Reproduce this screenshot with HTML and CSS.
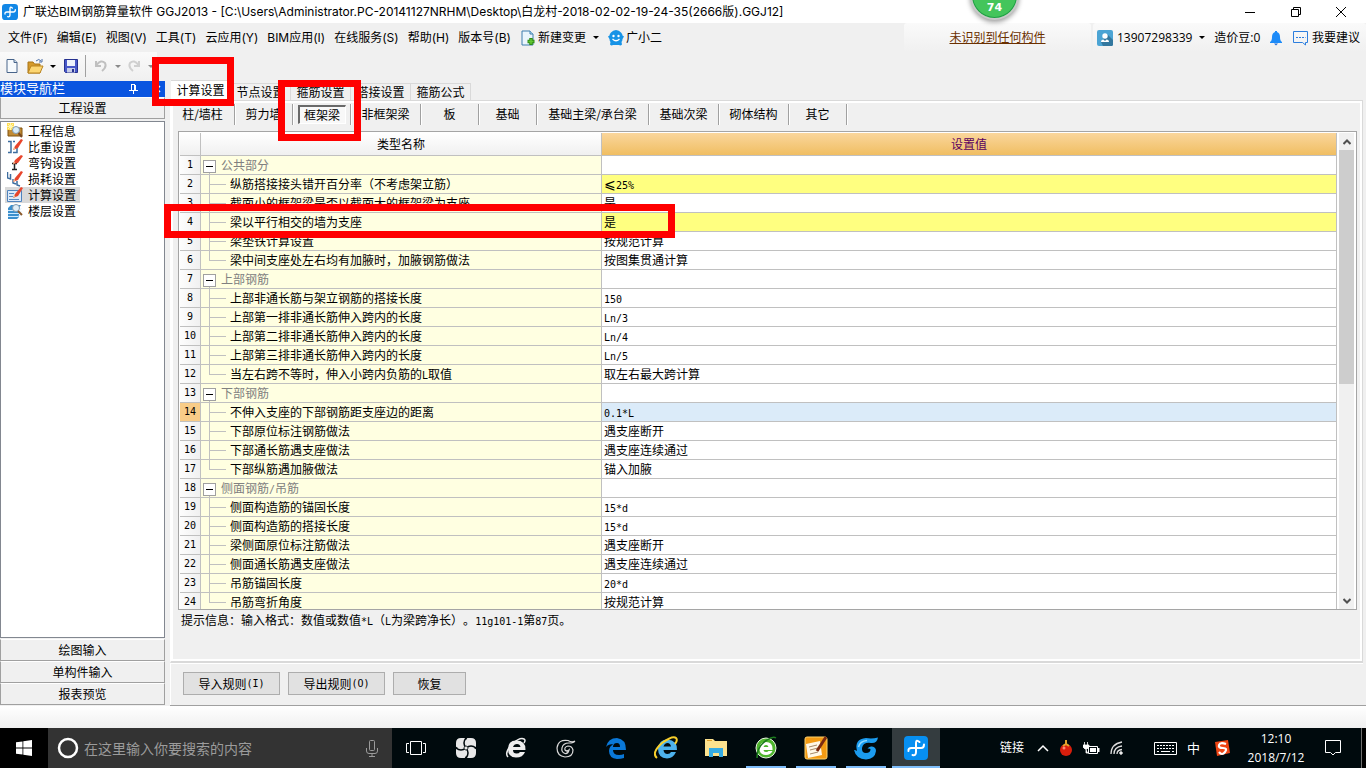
FILE: index.html
```html
<!DOCTYPE html>
<html lang="zh-CN">
<head>
<meta charset="utf-8">
<title>广联达BIM钢筋算量软件 GGJ2013</title>
<link rel="stylesheet" href="styles.css">
</head>
<body>
<header class="titlebar">
  <svg class="app-logo" width="16" height="16" viewBox="0 0 24 24"><rect width="24" height="24" rx="5" fill="#1287e6"/><path d="M15.500 6q-3.500-3-3.500 1v9q0 4-3.500 3M4.500 15q-.500-3 3-3H17q3 0 3-3.500" fill="none" stroke="#fff" stroke-width="2" stroke-linecap="round"/></svg>
  <h1 class="title">广联达BIM钢筋算量软件 GGJ2013 - [C:\Users\Administrator.PC-20141127NRHM\Desktop\白龙村-2018-02-02-19-24-35(2666版).GGJ12]</h1>
  <div class="window-controls">
    <button aria-label="最小化"><svg width="12" height="12"><path d="M1 6.500h10" stroke="#000"/></svg></button>
    <button aria-label="还原"><svg width="12" height="12" fill="none" stroke="#000"><path d="M1.500 3.500h7v7h-7zM3.500 3.500v-2h7v7h-2"/></svg></button>
    <button aria-label="关闭"><svg width="12" height="12"><path d="M1 1l10 10M11 1L1 11" stroke="#000"/></svg></button>
  </div>
  <div class="speed-ball"><span>74</span></div>
</header>

<nav class="menubar">
  <div class="menus">
    <button>文件(F)</button><button>编辑(E)</button><button>视图(V)</button><button>工具(T)</button><button>云应用(Y)</button><button>BIM应用(I)</button><button>在线服务(S)</button><button>帮助(H)</button><button>版本号(B)</button>
    <button class="with-icon"><svg width="16" height="16" viewBox="0 0 16 16"><path d="M2 1h8l3 3v11H2z" fill="#eaf5fc" stroke="#3f7fae"/><path d="M10 1v3h3" fill="#b8dcf2" stroke="#3f7fae"/><path d="M11 8v7M7.500 11.500h7" stroke="#2f8c16" stroke-width="3.500"/><path d="M11 9v5M8.500 11.500h5" stroke="#63c834" stroke-width="1.500"/></svg>新建变更<i class="caret"></i></button>
    <button class="with-icon"><svg width="16" height="16" viewBox="0 0 16 16"><path d="M3 2.500Q5 0 8 0t5 2.500q1.500 1.500 1.500 3l1.500 1-1.500 2.500q0 2-1 3l.500 2.500q-1.500 1.500-3 .500H5q-1.500 1-3-.500l.500-2.500q-1-1-1-3L0 6.500l1.500-1q0-1.500 1.500-3z" fill="#1793e6"/><circle cx="5.500" cy="6" r="1.200" fill="#fff"/><circle cx="10.500" cy="6" r="1.200" fill="#fff"/><path d="M4.500 9q3.500 3.500 7 0" fill="none" stroke="#fff" stroke-width="1.200"/></svg>广小二</button>
  </div>
  <div class="component-link"><a href="#">未识别到任何构件</a></div>
  <div class="account">
    <button class="user"><svg width="16" height="16" viewBox="0 0 16 16"><rect width="16" height="16" rx="2" fill="#4ba4d4"/><path d="M10 4l6 6v5l-1 1H6l-2-4z" fill="#33789f"/><circle cx="8" cy="6" r="2.700" fill="#fff"/><path d="M4 12q0-2.500 2.500-2.500L8 11l1.500-1.500Q12 9.500 12 12z" fill="#fff"/></svg>13907298339<i class="caret"></i></button>
    <span class="beans">造价豆:0</span>
    <button aria-label="通知"><svg width="14" height="16" viewBox="0 0 14 16"><path d="M6 1h2v1q3 1 3 5t2 5v1H1v-1q2-1 2-5t3-5z" fill="#1d8bf8"/><path d="M5 13.500h4L7 15.500z" fill="#1d6bd8"/></svg></button>
    <button class="suggest"><svg width="17" height="16" viewBox="0 0 17 16" fill="none" stroke="#2d7ede"><path d="M1.500 1.500h14v11h-2v2.500l-3-2.500h-9z"/><path d="M4 7.500h9.500" stroke-dasharray="2 1"/></svg>我要建议</button>
  </div>
</nav>

<div class="toolbar">
  <button aria-label="新建"><svg width="16" height="16" viewBox="0 0 16 16"><path d="M3 1.500h7l3 3v10H3z" fill="#f6fafd" stroke="#48648a"/><path d="M10 1.500v3h3" fill="#cfe0ef" stroke="#48648a"/></svg></button>
  <button class="open" aria-label="打开"><svg width="17" height="16" viewBox="0 0 17 16"><path d="M1 4h5l1.500 2H13v9H1z" fill="#d59a2b" stroke="#a87418"/><path d="M4 8h12l-3 7H1z" fill="#fcd672" stroke="#b98421"/><path d="M9 3q3-3 5 0m1-2v3h-3" fill="none" stroke="#4a6fa8"/></svg><i class="caret"></i></button>
  <button class="save" aria-label="保存"><svg width="16" height="16" viewBox="0 0 16 16"><path d="M1.500 1.500h13v13h-12l-1-1z" fill="#4858c8" stroke="#26318f"/><path d="M4 2h8v6H4z" fill="#eef2fb"/><path d="M4 10h8v4.500H4z" fill="#c7cde8"/><path d="M9 11h2v3H9z" fill="#26318f"/></svg></button>
  <i class="divider"></i>
  <button aria-label="撤销" class="undo"><svg width="14" height="14" viewBox="0 0 14 14" fill="none" stroke="#c0c0c0" stroke-width="2"><path d="M2 2v5h5M2.500 6Q7 0 11 4q2 4-3 8"/></svg><i class="caret dim"></i></button>
  <button aria-label="恢复" class="undo"><svg width="14" height="14" viewBox="0 0 14 14" fill="none" stroke="#d0d0d0" stroke-width="2"><path d="M12 2v5H7M11.500 6Q7 0 3 4q-2 4 3 8"/></svg><i class="caret dim"></i></button>
</div>

<main class="workspace">
  <aside class="sidebar">
    <div class="side-title"><span>模块导航栏</span>
      <svg width="9" height="10" viewBox="0 0 9 10"><path d="M2.500 1v5M2 .500h4M5.500 1v5M6.500 1v5M0 6.500h9M4.500 7v3" stroke="#fff" fill="none"/></svg>
      <svg width="7" height="8" viewBox="0 0 7 8"><path d="M0 1l6 6M6 1L0 7" stroke="#fff" stroke-width="1.500"/></svg>
    </div>
    <button class="side-button">工程设置</button>
    <ul class="side-list">
      <li><a href="#"><svg width="16" height="16" viewBox="0 0 16 16"><path d="M1 4h5l2 1h7v8H1z" fill="#c18b35" stroke="#80520e"/><path d="M0 0h7v7H0z" fill="#ffdd55"/><path d="M3.500 0v7M0 3.500h7M1 1l5 5M6 1L1 6" stroke="#fff5b0"/><circle cx="9" cy="7" r="3.500" fill="#d8ecf8" stroke="#8098ac"/><path d="M11.500 10l3.500 4" stroke="#7a4a22" stroke-width="2"/></svg>工程信息</a></li>
      <li><a href="#"><svg width="16" height="16" viewBox="0 0 16 16"><path d="M1 2.500h3v11H1M8 2.500H6m0 11h4V8" fill="none" stroke="#3d6d9f" stroke-width="1.500"/><path d="M6 11l2-4 6-7 2 1-5 8z" fill="#e8452c"/><path d="M6 11l1-3 1.500 1.500z" fill="#edc08f"/></svg>比重设置</a></li>
      <li><a href="#"><svg width="16" height="16" viewBox="0 0 16 16"><path d="M5 8.500h5M7.500 8v6M5 14.500h5" stroke="#222" stroke-width="1.500"/><path d="M6 9l2-4 6-5 2 1-5 7z" fill="#e8452c"/><path d="M6 9l1-2.500L8.500 8z" fill="#edc08f"/></svg>弯钩设置</a></li>
      <li><a href="#"><svg width="16" height="16" viewBox="0 0 16 16"><path d="M.500 1v6l3 1V3M6 8v4l3 1M10 10v4l3 1" fill="none" stroke="#3d6d9f" stroke-width="1.500"/><path d="M6 11l2-4 6-7 2 1-5 8z" fill="#e8452c"/><path d="M6 11l1-3 1.500 1.500z" fill="#edc08f"/></svg>损耗设置</a></li>
      <li class="selected"><a href="#"><svg width="16" height="16" viewBox="0 0 16 16"><path d="M.500 3.500h14v11H.500z" fill="#dceafa" stroke="#4f83bd"/><path d="M2 6.500h5M2 9.500h4M2 12.500h10" stroke="#5c8bc0"/><path d="M6 11l2-4 6-7 2 1-5 8z" fill="#e8452c"/><path d="M6 11l1-3 1.500 1.500z" fill="#edc08f"/></svg>计算设置</a></li>
      <li><a href="#"><svg width="16" height="16" viewBox="0 0 16 16"><path d="M1 5l3-3h10l-2 3v9l-2 2H1z" fill="#3b8fcd"/><path d="M1 7.500h11l2-2M1 10.500h11l2-2M1 13.500h10l3-2" fill="none" stroke="#cdeaff"/><circle cx="9" cy="5" r="3.500" fill="#dfeef8" stroke="#8098ac"/><path d="M11 8l4 4" stroke="#8b5a2c" stroke-width="2"/></svg>楼层设置</a></li>
    </ul>
    <button class="side-button">绘图输入</button>
    <button class="side-button">单构件输入</button>
    <button class="side-button">报表预览</button>
  </aside>

  <section class="content">
    <div class="tabs">
      <button class="active">计算设置</button><button>节点设置</button><button>箍筋设置</button><button>搭接设置</button><button>箍筋公式</button>
    </div>
    <div class="panel">
      <div class="subtabs">
        <button class="first">柱/墙柱</button><button>剪力墙</button><button class="pressed"><span>框架梁</span></button><button class="mid">非框架梁</button><button>板</button><button>基础</button><button class="wide">基础主梁/承台梁</button><button class="mid">基础次梁</button><button class="mid">砌体结构</button><button>其它</button>
      </div>
      <div class="grid">
        <div class="grid-view">
          <table>
            <colgroup><col class="c-num"><col class="c-name"><col></colgroup>
            <thead><tr><th></th><th>类型名称</th><th class="value-head">设置值</th></tr></thead>
            <tbody>
              <tr class="group"><th>1</th><td><button aria-label="折叠"></button>公共部分</td><td></td></tr>
              <tr class="changed"><th>2</th><td>纵筋搭接接头错开百分率（不考虑架立筋）</td><td><span class="sign">⩽</span><span class="m">25%</span></td></tr>
              <tr><th>3</th><td>截面小的框架梁是否以截面大的框架梁为支座</td><td>是</td></tr>
              <tr class="changed"><th>4</th><td>梁以平行相交的墙为支座</td><td>是</td></tr>
              <tr><th>5</th><td>梁垫铁计算设置</td><td>按规范计算</td></tr>
              <tr class="last"><th>6</th><td>梁中间支座处左右均有加腋时，加腋钢筋做法</td><td>按图集贯通计算</td></tr>
              <tr class="group"><th>7</th><td><button aria-label="折叠"></button>上部钢筋</td><td></td></tr>
              <tr><th>8</th><td>上部非通长筋与架立钢筋的搭接长度</td><td><span class="m">150</span></td></tr>
              <tr><th>9</th><td>上部第一排非通长筋伸入跨内的长度</td><td><span class="m">Ln/3</span></td></tr>
              <tr><th>10</th><td>上部第二排非通长筋伸入跨内的长度</td><td><span class="m">Ln/4</span></td></tr>
              <tr><th>11</th><td>上部第三排非通长筋伸入跨内的长度</td><td><span class="m">Ln/5</span></td></tr>
              <tr class="last"><th>12</th><td>当左右跨不等时，伸入小跨内负筋的<span class="m">L</span>取值</td><td>取左右最大跨计算</td></tr>
              <tr class="group"><th>13</th><td><button aria-label="折叠"></button>下部钢筋</td><td></td></tr>
              <tr class="current"><th>14</th><td>不伸入支座的下部钢筋距支座边的距离</td><td><span class="m">0.1*L</span></td></tr>
              <tr><th>15</th><td>下部原位标注钢筋做法</td><td>遇支座断开</td></tr>
              <tr><th>16</th><td>下部通长筋遇支座做法</td><td>遇支座连续通过</td></tr>
              <tr class="last"><th>17</th><td>下部纵筋遇加腋做法</td><td>锚入加腋</td></tr>
              <tr class="group"><th>18</th><td><button aria-label="折叠"></button>侧面钢筋<span class="m">/</span>吊筋</td><td></td></tr>
              <tr><th>19</th><td>侧面构造筋的锚固长度</td><td><span class="m">15*d</span></td></tr>
              <tr><th>20</th><td>侧面构造筋的搭接长度</td><td><span class="m">15*d</span></td></tr>
              <tr><th>21</th><td>梁侧面原位标注筋做法</td><td>遇支座断开</td></tr>
              <tr><th>22</th><td>侧面通长筋遇支座做法</td><td>遇支座连续通过</td></tr>
              <tr><th>23</th><td>吊筋锚固长度</td><td><span class="m">20*d</span></td></tr>
              <tr class="last"><th>24</th><td>吊筋弯折角度</td><td>按规范计算</td></tr>
            </tbody>
          </table>
        </div>
        <div class="scrollbar">
          <button aria-label="向上"><svg width="8" height="6" viewBox="0 0 8 6"><path d="M.500 5L4 1.500 7.500 5" fill="none" stroke="#505050" stroke-width="2"/></svg></button>
          <div class="track"><div class="thumb"></div></div>
          <button aria-label="向下"><svg width="8" height="6" viewBox="0 0 8 6"><path d="M.500 1L4 4.500 7.500 1" fill="none" stroke="#505050" stroke-width="2"/></svg></button>
        </div>
      </div>
      <p class="hint">提示信息：输入格式：数值或数值<span class="m">*L</span>（<span class="m">L</span>为梁跨净长）。<span class="m">11g101-1</span>第<span class="m">87</span>页。</p>
    </div>
    <div class="actions">
      <button>导入规则<span class="m">(I)</span></button><button>导出规则<span class="m">(O)</span></button><button class="short">恢复</button>
    </div>
  </section>
  <div class="mark mark-tab"></div>
  <div class="mark mark-subtab"></div>
  <div class="mark mark-row"></div>
</main>
<div class="statusbar"></div>

<footer class="taskbar">
  <button class="start" aria-label="开始"><svg width="16" height="16" viewBox="0 0 16 16" fill="#fff"><path d="M0 2.300l6.500-.900v6.200H0zM7.300 1.300L16 0v7.600H7.300zM0 8.400h6.500v6.200L0 13.700zM7.300 8.400H16V16l-8.700-1.300z"/></svg></button>
  <label class="search"><svg width="22" height="22"><circle cx="11" cy="11" r="9" fill="none" stroke="#fff" stroke-width="2.500"/></svg><input type="text" placeholder="在这里输入你要搜索的内容" aria-label="搜索"><svg width="12" height="17" viewBox="0 0 12 17" fill="none" stroke="#9b9b9b"><rect x="3.500" y=".500" width="5" height="10" rx="1"/><path d="M.500 8v3q0 2.500 2.500 2.500h6q2.500 0 2.500-2.500V8M6 13.500v3M3 16.500h6"/></svg></label>
  <div class="apps">
    <button aria-label="任务视图"><svg width="20" height="14" fill="none" stroke="#fff"><path d="M4.500.500h11v13h-11zM3 2.500H.500v9H3M17 2.500h2.500v9H17"/></svg></button>
    <button aria-label="风扇"><svg width="22" height="22" viewBox="0 0 22 22"><path d="M6 1h10q5 0 5 5v10q0 5-5 5H6q-5 0-5-5V6q0-5 5-5z" fill="#e8e8e8"/><path d="M11 11Q7 6 11 1M11 11q5-4 10 0M11 11q4 5 0 10M11 11q-5 4-10 0" fill="none" stroke="#000a0d" stroke-width="1.500"/><circle cx="11" cy="11" r="2" fill="#e8e8e8" stroke="#000a0d" stroke-width=".800"/><path d="M9 0h4l-2 3zM9 22h4l-2-3zM0 9v4l3-2zM22 9v4l-3-2z" fill="#000a0d"/></svg></button>
    <button aria-label="浏览器"><svg width="22" height="22" viewBox="0 0 22 22"><path d="M20 15q-2 5.500-9 5.500-8 0-8-8.500t8-8.500q10 0 9.500 9.500H8q0 3.500 3.500 3.500 2.500 0 3.500-1.500zM8 10h7.500q-.500-3-3.500-3t-4 3z" fill="#eee" fill-rule="evenodd"/><path d="M3 20Q-1 16 7 7q8-7 12-5 2 1 0 4" fill="none" stroke="#eee" stroke-width="1.500"/></svg></button>
    <button aria-label="广联达"><svg width="20" height="20" viewBox="0 0 20 20" fill="none" stroke="#d9d9d9" stroke-width="1.200"><path d="M19 3q-3 2-7-.500Q2 1 1 10q0 8 8 9 8 0 8-7-1-4-5-4-4 1-3 4 2 2 4 0-1 4-4 3.500Q5 14 6 10q1-5 7-5 5 0 6-2"/></svg></button>
    <button aria-label="Edge"><svg width="20" height="21" viewBox="0 0 20 21"><path d="M0 9Q2 0 11 0q9 1 9 12H7q0 5 6 5 3 0 5-1v4q-3 1-7 1-8-1-8-8 0-5 5-7-6 0-8 3zM7 9h7q0-4-3-4-4 0-4 4z" fill="#0a78d7" fill-rule="evenodd"/></svg></button>
    <button aria-label="Internet Explorer"><svg width="24" height="24" viewBox="0 0 24 24"><path d="M22 16q-3 6.500-9 6.500-9-.500-9-10 1-9 9.500-9 10 1 9.500 10.500H9.500q.500 4 4 4 2.500 0 3.500-2zM9.500 10.500H17q-.500-3.500-3.500-3.500t-4 3.500z" fill="#4db2ec" fill-rule="evenodd"/><path d="M3 22Q-3 17 8 7q11-8 14-5 2 2-1 6" fill="none" stroke="#f7cf2c" stroke-width="2"/></svg></button>
    <button aria-label="文件资源管理器"><svg width="22" height="18" viewBox="0 0 22 18"><path d="M0 0h8l2 2h12v15H0z" fill="#fce28e"/><path d="M2 1h5v1H2z" fill="#de9e27"/><path d="M4 9h14v9h-4v-4H8v4H4z" fill="#35abe3"/></svg></button>
    <button class="running" aria-label="360浏览器"><svg width="22" height="24" viewBox="0 0 22 24"><circle cx="11" cy="12" r="10" fill="#4fb52e" stroke="#e8f6e2"/><path d="M17.500 15q-2 4-6.500 4-6.500 0-6.500-6.500T11 6q7 0 6.500 8H8.500q0 2 2.500 2 2 0 2.500-1zM8.500 11h5q-.500-2-2.500-2t-2.500 2z" fill="#fff" fill-rule="evenodd"/><path d="M2 22Q2 10 12 4q6-4 9-2" fill="none" stroke="#1b7b1d" stroke-width="1.500"/></svg></button>
    <button class="running" aria-label="笔记"><svg width="24" height="24" viewBox="0 0 24 24"><rect x="1" y="1" width="22" height="22" rx="2" fill="#f39b13" stroke="#ffd36d"/><path d="M2 8l14-3 2 14-14 3z" fill="#fff8e8"/><path d="M5 11l8-2M6 14l8-2M6 18l8-2" stroke="#a78a68"/><path d="M13 15L22 1" stroke="#7c2b10" stroke-width="3"/></svg></button>
    <button class="running" aria-label="广联达G"><svg width="24" height="24" viewBox="0 0 24 24"><path d="M24 1.500q-1 6-7 5.500-8-1-9 5-.500 5 4 5t4.500-4q-2-1-3 0 1-3 4.500-2.500Q22 11 22 15q-1 8-10 8.500Q2 23 0 14q2 0 3 1Q0 3 12 2q6 1 12-.500z" fill="#1b9cef"/><path d="M4.500 11Q6 5 13 4.500" fill="none" stroke="#8ed9ff" stroke-width="1.500"/></svg></button>
    <button class="running current" aria-label="广联达BIM"><svg width="24" height="24" viewBox="0 0 24 24"><rect width="24" height="24" rx="4" fill="#078ff1"/><path d="M15.500 6q-3.500-3-3.500 1v9q0 4-3.500 3M4.500 15q-.500-3 3-3H17q3 0 3-3.500" fill="none" stroke="#fff" stroke-width="2" stroke-linecap="round"/></svg></button>
  </div>
  <div class="tray">
    <span class="links">链接</span>
    <button aria-label="显示隐藏的图标"><svg width="12" height="8"><path d="M1 7l5-5 5 5" fill="none" stroke="#fff" stroke-width="1.500"/></svg></button>
    <svg width="14" height="16" viewBox="0 0 14 16"><circle cx="7" cy="10" r="6" fill="#d81e0c"/><path d="M7 0v5M4 6l3-2 3 2" stroke="#e0a42c" stroke-width="2" fill="none"/><circle cx="5" cy="8" r="1.500" fill="#ff8672"/></svg>
    <svg width="17" height="13" viewBox="0 0 17 13"><path d="M5.500 4.500h9v7h-9z" fill="none" stroke="#fff"/><path d="M7 6h6v4H7zM15 6h1.500v4H15z" fill="#fff"/><path d="M1.500 0v3M4.500 0v3M0 3h6v2L4 7H2L0 5zM3 7v4h2" fill="#fff" stroke="#fff" stroke-width=".800"/></svg>
    <svg width="14" height="14" viewBox="0 0 14 14" fill="none" stroke="#ddd"><path d="M1 13Q1 3 12 1M4 13q0-7 8-8M7 13q0-4 5-4.500" stroke-width="1.300"/><circle cx="11" cy="12" r="1.300" fill="#fff"/></svg>
    <svg class="keyboard" width="23" height="13" viewBox="0 0 23 13" fill="none" stroke="#fff"><path d="M.500.500h22v12H.500z"/><path d="M3 3.500h17M3 6.500h17" stroke-dasharray="2 1"/><path d="M3 9.500h2M7 9.500h9M18 9.500h2"/></svg>
    <span class="ime">中</span>
    <svg width="16" height="16" viewBox="0 0 16 16"><path d="M1 2l13-2 2 13-13 3z" fill="#ee4514"/><path d="M12 4Q6 2 5 5t4 3 2 4-6 0" fill="none" stroke="#fff" stroke-width="2.200"/></svg>
    <time><span>12:10</span><span>2018/7/12</span></time>
    <button class="notice" aria-label="操作中心"><svg width="17" height="16" fill="none" stroke="#fff"><path d="M.500.500h15v12h-5l-2.500 2.500-2.500-2.500h-5z"/></svg></button>
  </div>
  <button class="show-desktop" aria-label="显示桌面"></button>
</footer>
</body>
</html>
```
FILE: styles.css
```css
* { box-sizing: border-box; }

body {
  margin: 0;
  height: 100vh;
  display: flex;
  flex-direction: column;
  overflow: hidden;
  background: #f0f0f0;
  color: #000;
  font: 12px/16px "Open Sans", "Noto Sans CJK SC", sans-serif;
  white-space: nowrap;
  text-spacing-trim: space-all;
}

button {
  display: flex;
  align-items: center;
  justify-content: center;
  margin: 0;
  padding: 0;
  border: 0;
  background: none;
  color: inherit;
  font: inherit;
  white-space: nowrap;
}

svg { flex: none; display: block; }

.m { font-family: "DejaVu Sans Mono", monospace; font-size: 10px; line-height: 1; }

.caret {
  border: 3px solid transparent;
  border-top-color: #000;
  border-bottom: 0;
}
.caret.dim { border-top-color: #8a8a8a; }

/* title bar */
.titlebar {
  position: relative;
  z-index: 1;
  flex: none;
  display: flex;
  align-items: center;
  height: 23px;
  padding-left: 2px;
  background: #fff;
}
.title { flex: 1; margin: 0 0 0 5px; font: 400 12px/16px Inter, "Noto Sans CJK SC", sans-serif; }
.window-controls { display: flex; padding-right: 3px; }
.window-controls button { width: 46px; height: 20px; }
.window-controls button:last-child { width: 44px; }
.speed-ball {
  position: absolute;
  top: -29px;
  left: 970px;
  width: 49px;
  height: 49px;
  display: flex;
  justify-content: center;
  align-items: flex-end;
  padding-bottom: 2px;
  border: 2px solid #c9c9c9;
  border-radius: 50%;
  background: #44c55b;
  box-shadow: inset 0 0 0 1px #1f9c45, 0 2px 5px rgba(0, 0, 0, 0.4);
  color: #fff;
  font: bold 11px/16px "DejaVu Sans", sans-serif;
}

/* menu bar */
.menubar { flex: none; display: flex; height: 29px; }
.menus { flex: 1; display: flex; align-items: center; gap: 9px; padding-left: 8px; font-family: Inter, "Noto Sans CJK SC", sans-serif; }
.with-icon { gap: 2px; }
.with-icon .caret { margin-left: 5px; }
.component-link,
.account {
  display: flex;
  align-items: center;
  border-radius: 3px;
  background: linear-gradient(#fafafa, #f0f0f0);
}
.component-link { justify-content: center; width: 187px; margin-right: 2px; }
.component-link a { color: #6b3000; }
.account { width: 273px; padding-left: 4px; justify-content: space-between; padding-right: 6px; }
.user { gap: 4px; }
.user .caret { margin-left: 3px; }
.suggest { gap: 3px; }

/* toolbar */
.toolbar {
  flex: none;
  display: flex;
  align-items: center;
  align-self: flex-start;
  height: 28px;
  padding-left: 4px;
  background: linear-gradient(#fafafa, #f0f0f0);
}
.open { gap: 6px; margin-left: 7px; }
.save { margin-left: 7px; }
.divider { width: 1px; height: 22px; margin: 0 5px 0 6px; background: #a0a0a0; }
.undo { gap: 7px; width: 33px; }

/* workspace */
.workspace {
  position: relative;
  flex: 1;
  min-height: 0;
  display: flex;
  gap: 5px;
  font-family: "Noto Sans CJK SC", sans-serif;
}
.sidebar { width: 165px; padding: 1px 0; display: flex; flex-direction: column; }
.side-title {
  display: flex;
  align-items: center;
  gap: 16px;
  height: 16px;
  padding-right: 4px;
  background: #0a55e0;
  color: #fff;
  font-size: 13px;
}
.side-title span { flex: 1; line-height: 14px; padding-bottom: 2px; }
.side-button {
  height: 22px;
  border: 1px solid #a0a0a0;
  border-top-color: #fff;
  background: #f0f0f0;
  flex: none;
}
.side-list {
  flex: 1;
  margin: 2px 0 1px;
  padding: 1px 4px;
  border: 1px solid #828790;
  background: #fff;
  list-style: none;
}
.side-list li { width: 75px; padding-left: 2px; }
.side-list a { display: flex; gap: 5px; height: 16px; color: #000; text-decoration: none; }
.selected { background: #d9d9d9; }

.content { flex: 1; min-width: 0; display: flex; flex-direction: column; padding-right: 3px; border-bottom: 1px solid #a0a0a0; }
.tabs { flex: none; display: flex; align-items: flex-end; height: 20px; padding-left: 1px; }
.tabs button {
  width: 60px;
  height: 17px;
  border: 1px solid #d9d9d9;
  border-width: 1px 1px 0 0;
}
.tabs .active { height: 20px; padding-bottom: 1px; background: #fff; }
.panel {
  flex: 1;
  min-height: 0;
  display: flex;
  flex-direction: column;
  padding: 0 5px 0 4px;
  border: 1px solid #d9d9d9;
  border-left-color: #fff;
  border-bottom-width: 2px;
  box-shadow: inset 0 0 0 2px #fff;
}
.subtabs { flex: none; display: flex; height: 30px; padding-top: 3px; }
.subtabs button { width: 58px; height: 21px; padding-bottom: 1px; border-right: 1px solid #a0a0a0; box-shadow: 1px 0 #fff; }
.subtabs .first { width: 60px; padding-right: 4px; }
.subtabs .mid { width: 70px; }
.subtabs .wide { width: 112px; }
.subtabs .pressed span {
  width: 48px;
  border: 1px solid #fff;
  border-top: 2px solid #696969;
  border-left: 2px solid #696969;
  background: #f8f8f8;
}
.grid {
  flex: 1;
  min-height: 0;
  display: flex;
  gap: 2px;
  margin-left: 3px;
  padding: 1px 2px 0 1px;
  border: 1px solid #a5a5a5;
  background: #fff;
}
.grid-view { flex: 1; overflow: hidden; }
table { width: 100%; table-layout: fixed; border-spacing: 0; }
.c-num { width: 21px; }
.c-name { width: 401px; }
th, td { height: 19px; padding: 0 2px; border: 0 solid #c0c0c0; border-width: 0 1px 1px 0; line-height: 16px; text-align: left; }
thead th { height: 23px; padding: 0; background: linear-gradient(#fff, #f0f0f0); font-weight: 400; text-align: center; }
thead .value-head { background: linear-gradient(#fad69c, #f0be62); color: #5a0060; }
tbody th {
  padding: 0;
  background: linear-gradient(90deg, #fdfdfd, #f0f0f0);
  font: 10px/16px "DejaVu Sans Mono", monospace;
  text-align: center;
}
tbody td:nth-child(2) {
  padding-left: 29px;
  background:
    linear-gradient(#c0c0c0, #c0c0c0) 8px 0 / 1px 100% no-repeat,
    linear-gradient(#c0c0c0, #c0c0c0) 8px 9px / 17px 1px no-repeat,
    #ffffe1;
}
tbody .last td:nth-child(2) { background-size: 1px 9px, 17px 1px, auto; }
tbody .group td:nth-child(2) {
  padding-left: 2px;
  background:
    linear-gradient(#c0c0c0, #c0c0c0) 8px 100% / 1px 4px no-repeat,
    #ffffe1;
  color: #808080;
}
.group button {
  display: inline-block;
  width: 13px;
  height: 13px;
  margin-right: 5px;
  border: 1px solid #a0a0a0;
  background: linear-gradient(#000, #000) center / 7px 1px no-repeat #fff;
  vertical-align: -2px;
}
.sign { font-size: 14px; line-height: 1; }
.changed td:last-child { background: #ffff80; }
.current td:last-child { background: #dbebf9; }
.current th { background: #f8cc88; }
.scrollbar { width: 15px; display: flex; flex-direction: column; background: #f0f0f0; }
.scrollbar button { height: 17px; }
.track { flex: 1; }
.thumb { height: 53%; background: #cdcdcd; }
.hint { flex: none; height: 51px; margin: 0; padding: 2px 0 0 6px; }
.actions {
  flex: none;
  display: flex;
  gap: 8px;
  height: 42px;
  padding: 8px 0 0 12px;
  border: 1px solid #fff;
  border-width: 1px 0 0 1px;
}
.actions button { width: 97px; height: 23px; border: 1px solid #adadad; background: #e1e1e1; }
.actions .short { width: 73px; }

/* highlight frames over the workspace */
.mark { position: absolute; border: 7px solid #f00; pointer-events: none; }
.mark-tab { left: 152px; top: -23px; width: 82px; height: 49px; }
.mark-subtab { left: 278px; top: 0; width: 83px; height: 61px; }
.mark-row { left: 164px; top: 124px; width: 511px; height: 34px; }

.statusbar { flex: none; height: 22px; background: linear-gradient(#fff, #f0f0f0); }

/* taskbar */
.taskbar { flex: none; display: flex; height: 40px; background: #000a0d; color: #fff; }
.start { width: 48px; background: #000; }
.search { display: flex; align-items: center; width: 344px; padding: 0 14px 0 9px; background: #333; }
.search input { flex: 1; min-width: 0; padding: 0 5px; border: 0; outline: 0; background: none; color: #fff; font: 14px/20px "Noto Sans CJK SC", sans-serif; }
.search input::placeholder { color: #9b9b9b; opacity: 1; }
.apps { flex: 1; display: flex; gap: 2px; }
.apps button { width: 48px; padding-top: 2px; border-bottom: 2px solid transparent; }
.apps .running { background: linear-gradient(#7ebdfa, #7ebdfa) center bottom / 40px 2px no-repeat; background-origin: border-box; background-clip: border-box; }
.apps .current { background: #343c3f; border-bottom-color: #7ebdfa; }
.tray { display: flex; align-items: center; gap: 10px; padding-right: 16px; }
.links { margin-right: 3px; }
.keyboard { margin-left: 20px; }
.ime { margin-right: 4px; font-size: 13px; }
.tray time { display: flex; flex-direction: column; align-items: center; width: 70px; line-height: 19px; margin-left: 1px; }
.notice { width: 24px; height: 40px; }
.show-desktop { width: 5px; border-left: 1px solid #6f6f6f; background: #000; }
```
